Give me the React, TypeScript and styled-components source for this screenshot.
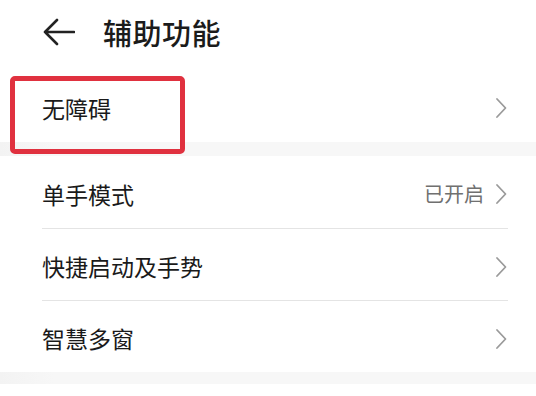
import React from "react";
import styled, { createGlobalStyle } from "styled-components";

const Global = createGlobalStyle`
  html, body { margin: 0; padding: 0; background: #ffffff; }
  body { font-family: "Noto Sans CJK SC", "Noto Sans", sans-serif; -webkit-font-smoothing: antialiased; }
`;

const Page = styled.div`
  width: 536px;
  height: 396px;
  background: #ffffff;
  position: relative;
  overflow: hidden;
  display: flex;
  flex-direction: column;
`;

const Header = styled.div`
  height: 70px;
  display: flex;
  align-items: center;
  padding-left: 43px;
  padding-bottom: 6px;
  box-sizing: border-box;
  gap: 28px;
  flex-shrink: 0;
`;

const Title = styled.div`
  font-size: 29px;
  font-weight: 500;
  color: #1b1b1b;
  letter-spacing: 0.5px;
  line-height: 1;
`;

const Card = styled.div`
  background: #ffffff;
  display: flex;
  flex-direction: column;
  flex-shrink: 0;
`;

const Band = styled.div<{ $h: number }>`
  height: ${(p) => p.$h}px;
  background: linear-gradient(90deg, #f3f3f3 0%, #f7f7f7 10%, #f7f7f7 100%);
  flex-shrink: 0;
`;

const Row = styled.div<{ $divider?: boolean }>`
  height: 72px;
  margin: 0 28px 0 42px;
  padding-top: 4px;
  display: flex;
  align-items: center;
  justify-content: space-between;
  border-top: ${(p) => (p.$divider ? "1px solid #e4e4e4" : "none")};
  box-sizing: border-box;
`;

const Label = styled.div`
  font-size: 23px;
  color: #1a1a1a;
  line-height: 1;
`;

const Right = styled.div`
  display: flex;
  align-items: center;
  gap: 10px;
`;

const Status = styled.div`
  font-size: 20px;
  color: #707070;
  line-height: 1;
`;

const Highlight = styled.div`
  position: absolute;
  left: 10px;
  top: 76px;
  width: 175px;
  height: 78px;
  border: 5px solid #e0313f;
  border-radius: 5px;
  box-sizing: border-box;
  pointer-events: none;
`;

const Chevron = () => (
  <svg width="14" height="22" viewBox="0 0 14 22" fill="none">
    <path d="M3 2 L11.5 11 L3 20" stroke="#9a9a9a" strokeWidth="1.8" strokeLinecap="round" strokeLinejoin="round" />
  </svg>
);

const BackArrow = () => (
  <svg width="32" height="28" viewBox="0 0 32 28" fill="none">
    <path d="M14 2 L2 14 L14 26 M2 14 H31" stroke="#222" strokeWidth="2.6" strokeLinecap="round" strokeLinejoin="round" />
  </svg>
);

export default function App() {
  return (
    <Page>
      <Global />
      <Header>
        <BackArrow />
        <Title>辅助功能</Title>
      </Header>
      <Card>
        <Row>
          <Label>无障碍</Label>
          <Chevron />
        </Row>
      </Card>
      <Band $h={14} />
      <Card>
        <Row>
          <Label>单手模式</Label>
          <Right>
            <Status>已开启</Status>
            <Chevron />
          </Right>
        </Row>
        <Row $divider>
          <Label>快捷启动及手势</Label>
          <Chevron />
        </Row>
        <Row $divider>
          <Label>智慧多窗</Label>
          <Chevron />
        </Row>
      </Card>
      <Band $h={12} />
      <Highlight />
    </Page>
  );
}
